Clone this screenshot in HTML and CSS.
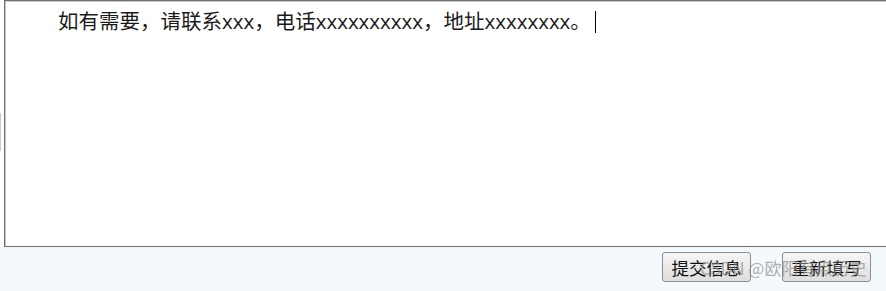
FILE: index.html
```html
<!DOCTYPE html>
<html lang="zh">
<head>
<meta charset="utf-8">
<title>留言</title>
<link rel="stylesheet" href="styles.css">
</head>
<body>
<div class="page">
  <div class="side-mark"></div>
  <div class="editor">
    <p class="content">如有需要，请联系xxx，电话xxxxxxxxxx，地址xxxxxxxx。<span class="caret"></span></p>
  </div>
</div>
<div class="actions">
  <span class="watermark">CSDN @欧阳有点历史</span>
  <button class="btn" type="button">提交信息</button>
  <button class="btn" type="button">重新填写</button>
</div>
</body>
</html>
```
FILE: styles.css
```css
html, body {
  margin: 0;
  padding: 0;
  background: #ffffff;
  overflow: hidden;
}
body {
  width: 886px;
  height: 291px;
  font-family: "Open Sans", "Noto Sans CJK SC", sans-serif;
}
.page {
  position: relative;
  padding-left: 4px;
}
.side-mark {
  position: absolute;
  left: 0;
  top: 113px;
  width: 1px;
  height: 38px;
  background: #b9d6cc;
}
.editor {
  height: 245px;
  border: 1px solid #6f6f6f;
  border-right: none;
  box-shadow: inset 1px 1px 0 #c8c8c8;
  padding: 0 0 0 53px;
  box-sizing: content-box;
  background: #fff;
}
.content {
  margin: 0;
  padding-top: 6px;
  font-family: "Open Sans", "Noto Sans CJK SC", sans-serif;
  font-size: 20.5px;
  line-height: 28px;
  color: #1a1a1a;
  white-space: nowrap;
}
.caret {
  display: inline-block;
  width: 1px;
  height: 22px;
  background: #000;
  margin-left: 4px;
  vertical-align: -4px;
}
.actions {
  position: relative;
  height: 44px;
  background: #f4f9fd;
  display: flex;
  justify-content: flex-end;
  align-items: flex-start;
  gap: 31px;
  padding: 5px 15px 0 0;
  box-sizing: border-box;
}
.btn {
  position: relative;
  z-index: 1;
  width: 89px;
  height: 30px;
  padding: 0;
  border: 1px solid #8e8e8e;
  border-radius: 3px;
  background: linear-gradient(#f6f6f6, #dedede);
  font-family: "Noto Sans CJK SC", sans-serif;
  font-size: 17.5px;
  color: #111;
}
.watermark {
  position: absolute;
  left: 700px;
  top: 8px;
  font-family: "Noto Sans CJK SC", sans-serif;
  font-size: 17px;
  color: rgba(140, 140, 140, 0.7);
  white-space: nowrap;
  z-index: 2;
  pointer-events: none;
}
```
